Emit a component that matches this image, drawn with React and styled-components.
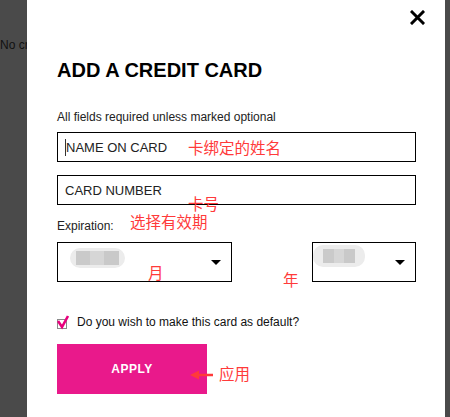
import React from "react";
import styled, { createGlobalStyle } from "styled-components";

const Global = createGlobalStyle`
  html, body { margin: 0; padding: 0; background: #4a4a4a; }
  body { font-family: "Liberation Sans", Arial, sans-serif; }
`;

const Page = styled.div`
  display: flex;
  width: 450px;
  height: 417px;
  overflow: hidden;
`;

const Shade = styled.div`
  flex: 0 0 ${(p) => p.$w}px;
  background: #4a4a4a;
  overflow: hidden;
  white-space: nowrap;
`;

const BgText = styled.div`
  margin-top: 38px;
  font-size: 12px;
  line-height: 14px;
  color: #111;
`;

const Modal = styled.div`
  position: relative;
  flex: 1;
  background: #fff;
  padding: 58px 29px 0 30px;
  color: #111;
`;

const Close = styled.button`
  position: absolute;
  top: 10px;
  right: 20px;
  width: 15px;
  height: 15px;
  padding: 0;
  border: 0;
  background: none;
  display: block;
`;

const Title = styled.h2`
  margin: 0;
  font-size: 20px;
  line-height: 25px;
  font-weight: bold;
  color: #000;
`;

const Note = styled.p`
  margin: 27px 0 0;
  font-size: 12px;
  line-height: 14px;
  color: #222;
`;

const Field = styled.div`
  box-sizing: border-box;
  margin-top: ${(p) => p.$mt}px;
  height: 30px;
  border: 1px solid #000;
  display: flex;
  align-items: center;
  padding-left: 7px;
  font-size: 13px;
  color: #222;
`;

const Caret = styled.span`
  display: inline-block;
  width: 1px;
  height: 17px;
  background: #333;
`;

const Label = styled.div`
  margin-top: 14px;
  font-size: 12px;
  line-height: 14px;
  color: #222;
`;

const SelectRow = styled.div`
  margin-top: 9px;
  display: flex;
  justify-content: space-between;
`;

const Select = styled.div`
  box-sizing: border-box;
  width: ${(p) => p.$w}px;
  height: 40px;
  border: 1px solid #000;
  display: flex;
  align-items: flex-start;
  justify-content: space-between;
  padding: ${(p) => p.$pt}px 10px 0 ${(p) => p.$pl}px;
`;

const Blob = styled.div`
  width: ${(p) => p.$w}px;
  height: ${(p) => p.$h}px;
  border-radius: 10px;
  background: #ececec;
  display: flex;
  justify-content: center;
  align-items: center;
  filter: blur(0.6px);
`;

const BlobCore = styled.div`
  width: ${(p) => p.$w}px;
  height: 14px;
  background: linear-gradient(90deg, #cacaca 0 33%, #d6d6d6 33% 66%, #c9c9c9 66%);
`;

const Arrow = styled.svg`
  margin-top: ${(p) => p.$mt}px;
  display: block;
`;

const CheckRow = styled.div`
  margin-top: 32px;
  display: flex;
  align-items: center;
  gap: 7px;
  font-size: 12px;
  line-height: 14px;
  color: #111;
`;

const Apply = styled.button`
  margin-top: 14px;
  width: 150px;
  height: 50px;
  border: 0;
  background: #e9198b;
  color: #fff;
  font-family: "Liberation Sans", Arial, sans-serif;
  font-weight: bold;
  font-size: 12px;
  letter-spacing: 0.5px;
  display: block;
  padding: 0;
`;

const Note2 = styled.span`
  position: absolute;
  left: ${(p) => p.$x}px;
  top: ${(p) => p.$y}px;
  font-family: "Noto Sans CJK SC", sans-serif;
  font-size: 15.5px;
  line-height: 16px;
  color: #ff3a3a;
  white-space: nowrap;
`;

const RedArrow = styled.svg`
  position: absolute;
  left: 163px;
  top: 370px;
`;

export default function App() {
  return (
    <>
      <Global />
      <Page>
        <Shade $w={27}>
          <BgText>No credit cards</BgText>
        </Shade>
        <Modal>
          <Close aria-label="close">
            <svg width="15" height="15" viewBox="0 0 15 15">
              <path d="M2 2 L13 13 M13 2 L2 13" stroke="#000" strokeWidth="3" strokeLinecap="square" />
            </svg>
          </Close>
          <Title>ADD A CREDIT CARD</Title>
          <Note>All fields required unless marked optional</Note>
          <Field $mt={8}>
            <Caret />
            NAME ON CARD
          </Field>
          <Field $mt={13}>CARD NUMBER</Field>
          <Label>Expiration:</Label>
          <SelectRow>
            <Select $w={175} $pl={12} $pt={5}>
              <Blob $w={55} $h={20}>
                <BlobCore $w={43} />
              </Blob>
              <Arrow $mt={12} width="10" height="5" viewBox="0 0 10 5">
                <path d="M0 0 H10 L5 5 Z" fill="#000" />
              </Arrow>
            </Select>
            <Select $w={104} $pl={0} $pt={2}>
              <Blob $w={52} $h={22}>
                <BlobCore $w={32} />
              </Blob>
              <Arrow $mt={15} width="10" height="5" viewBox="0 0 10 5">
                <path d="M0 0 H10 L5 5 Z" fill="#000" />
              </Arrow>
            </Select>
          </SelectRow>
          <CheckRow>
            <svg width="13" height="16" viewBox="0 0 13 16">
              <rect x="0.5" y="5.5" width="9" height="9" fill="#fff" stroke="#8a8a8a" />
              <path d="M1 7 L5 13 L11 2" fill="none" stroke="#e8007d" strokeWidth="2.6" strokeLinejoin="miter" />
            </svg>
            Do you wish to make this card as default?
          </CheckRow>
          <Apply>APPLY</Apply>

          <Note2 $x={161} $y={139}>卡绑定的姓名</Note2>
          <Note2 $x={161} $y={195}>卡号</Note2>
          <Note2 $x={103} $y={213}>选择有效期</Note2>
          <Note2 $x={121} $y={264}>月</Note2>
          <Note2 $x={256} $y={271}>年</Note2>
          <Note2 $x={192} $y={365}>应用</Note2>
          <RedArrow width="24" height="10" viewBox="0 0 24 10">
            <path d="M0 5 L9 0.5 L9 3.8 L23 3.8 L23 6.2 L9 6.2 L9 9.5 Z" fill="#ff3a3a" />
          </RedArrow>
        </Modal>
        <Shade $w={5} />
      </Page>
    </>
  );
}
